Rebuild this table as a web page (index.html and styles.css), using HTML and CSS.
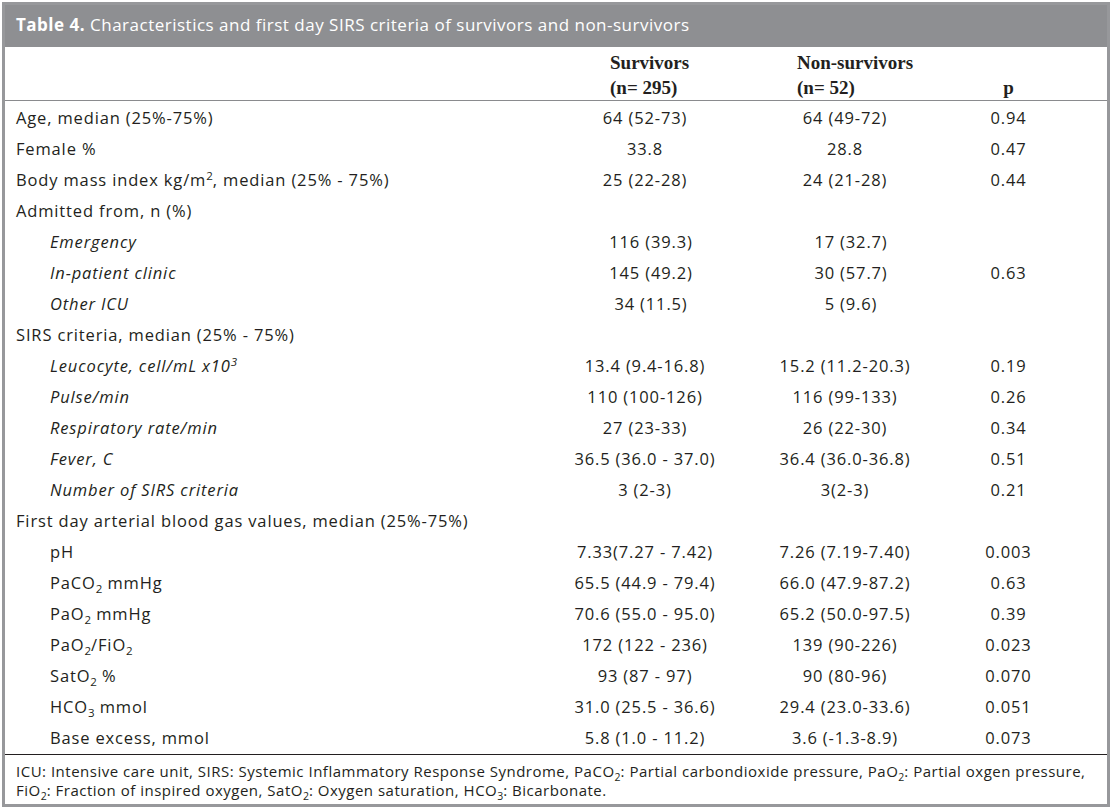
FILE: index.html
```html
<!DOCTYPE html>
<html>
<head>
<meta charset="utf-8">
<link rel="stylesheet" href="styles.css">
</head>
<body>
<div class="frame">
  <div class="title"><b>Table 4.</b> Characteristics and first day SIRS criteria of survivors and non-survivors</div>
  <table class="tbl">
    <colgroup>
      <col class="c-label">
      <col class="c-surv">
      <col class="c-non">
      <col class="c-p">
    </colgroup>
    <thead>
      <tr>
        <th class="h-label"></th>
        <th class="h-surv">Survivors<br>(n= 295)</th>
        <th class="h-non">Non-survivors<br>(n= 52)</th>
        <th class="h-p">p</th>
      </tr>
    </thead>
    <tbody>
      <tr><td>Age, median (25%-75%)</td><td>64 (52-73)</td><td>64 (49-72)</td><td>0.94</td></tr>
      <tr><td>Female %</td><td>33.8</td><td>28.8</td><td>0.47</td></tr>
      <tr><td>Body mass index kg/m<sup>2</sup>, median (25% - 75%)</td><td>25 (22-28)</td><td>24 (21-28)</td><td>0.44</td></tr>
      <tr><td>Admitted from, n (%)</td><td></td><td></td><td></td></tr>
      <tr><td class="ind it">Emergency</td><td class="sh">116 (39.3)</td><td class="sh">17 (32.7)</td><td></td></tr>
      <tr><td class="ind it">In-patient clinic</td><td class="sh">145 (49.2)</td><td class="sh">30 (57.7)</td><td>0.63</td></tr>
      <tr><td class="ind it">Other ICU</td><td class="sh">34 (11.5)</td><td class="sh">5 (9.6)</td><td></td></tr>
      <tr><td>SIRS criteria, median (25% - 75%)</td><td></td><td></td><td></td></tr>
      <tr><td class="ind it">Leucocyte, cell/mL x10<sup>3</sup></td><td>13.4 (9.4-16.8)</td><td>15.2 (11.2-20.3)</td><td>0.19</td></tr>
      <tr><td class="ind it">Pulse/min</td><td>110 (100-126)</td><td>116 (99-133)</td><td>0.26</td></tr>
      <tr><td class="ind it">Respiratory rate/min</td><td>27 (23-33)</td><td>26 (22-30)</td><td>0.34</td></tr>
      <tr><td class="ind it">Fever, C</td><td>36.5 (36.0 - 37.0)</td><td>36.4 (36.0-36.8)</td><td>0.51</td></tr>
      <tr><td class="ind it">Number of SIRS criteria</td><td>3 (2-3)</td><td>3(2-3)</td><td>0.21</td></tr>
      <tr><td>First day arterial blood gas values, median (25%-75%)</td><td></td><td></td><td></td></tr>
      <tr><td class="ind">pH</td><td>7.33(7.27 - 7.42)</td><td>7.26 (7.19-7.40)</td><td>0.003</td></tr>
      <tr><td class="ind">PaCO<sub>2</sub> mmHg</td><td>65.5 (44.9 - 79.4)</td><td>66.0 (47.9-87.2)</td><td>0.63</td></tr>
      <tr><td class="ind">PaO<sub>2</sub> mmHg</td><td>70.6 (55.0 - 95.0)</td><td>65.2 (50.0-97.5)</td><td>0.39</td></tr>
      <tr><td class="ind">PaO<sub>2</sub>/FiO<sub>2</sub></td><td>172 (122 - 236)</td><td>139 (90-226)</td><td>0.023</td></tr>
      <tr><td class="ind">SatO<sub>2</sub> %</td><td>93 (87 - 97)</td><td>90 (80-96)</td><td>0.070</td></tr>
      <tr><td class="ind">HCO<sub>3</sub> mmol</td><td>31.0 (25.5 - 36.6)</td><td>29.4 (23.0-33.6)</td><td>0.051</td></tr>
      <tr><td class="ind">Base excess, mmol</td><td>5.8 (1.0 - 11.2)</td><td>3.6 (-1.3-8.9)</td><td>0.073</td></tr>
    </tbody>
  </table>
  <div class="foot">ICU: Intensive care unit, SIRS: Systemic Inflammatory Response Syndrome, PaCO<sub>2</sub>: Partial carbondioxide pressure, PaO<sub>2</sub>: Partial oxgen pressure, FiO<sub>2</sub>: Fraction of inspired oxygen, SatO<sub>2</sub>: Oxygen saturation, HCO<sub>3</sub>: Bicarbonate.</div>
</div>
</body>
</html>
```

FILE: styles.css
```css
html, body {
  margin: 0;
  padding: 0;
  background: #ffffff;
}
body {
  padding: 2px;
  font-family: "Open Sans", Lato, sans-serif;
  color: #231f20;
}
.frame {
  width: 1102px;
  height: 799px;
  border: 3px solid #97989b;
  box-sizing: content-box;
  display: flex;
  flex-direction: column;
}
.title {
  background: #8e8f92;
  color: #ffffff;
  font-size: 17px;
  letter-spacing: 0.5px;
  height: 42px;
  line-height: 40px;
  padding-left: 11px;
  box-sizing: border-box;
  flex: none;
}
.title b {
  font-weight: 700;
}
.tbl {
  width: 100%;
  border-collapse: collapse;
  table-layout: fixed;
  font-size: 16.5px;
  letter-spacing: 0.85px;
  flex: none;
}
.c-label { width: 555px; }
.c-surv { width: 170px; }
.c-non { width: 230px; }
.c-p { width: 147px; }
.tbl th {
  font-family: "Liberation Serif", serif;
  font-weight: 700;
  font-size: 19px;
  letter-spacing: 0;
  line-height: 25px;
  text-align: left;
  vertical-align: bottom;
  padding: 3px 0 0 0;
  border-bottom: 1px solid #8a8b8e;
}
.tbl th.h-surv { padding-left: 50px; }
.tbl th.h-non { padding-left: 67px; }
.tbl th.h-p { text-align: center; padding-right: 50px; }
.tbl td {
  height: 29px;
  padding: 2px 0 0 0;
  text-align: center;
  vertical-align: middle;
  line-height: 22px;
}
.tbl td:first-child {
  text-align: left;
  padding-left: 11px;
}
.tbl td:last-child {
  padding-right: 50px;
}
.tbl td.ind { padding-left: 45px; }
.tbl td.it { font-style: italic; }
.tbl td.sh { padding-left: 12px; }
sub, sup {
  font-size: 70%;
  line-height: 0;
  letter-spacing: 0;
}
.foot {
  margin-top: auto;
  border-top: 1.5px solid #231f20;
  font-size: 15px;
  letter-spacing: 0.5px;
  line-height: 19px;
  padding: 7px 11px 4px 11px;
}
.foot sub { font-size: 70%; }
```
